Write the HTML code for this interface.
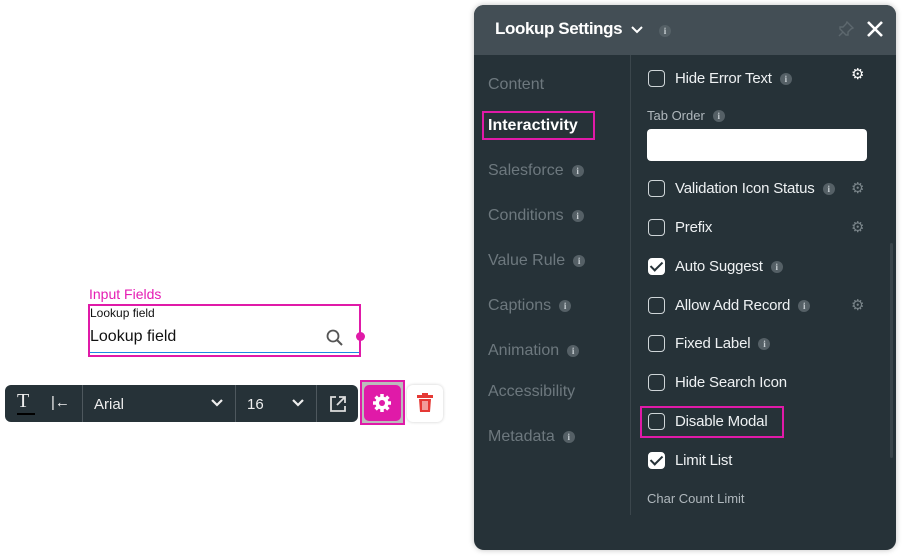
<!DOCTYPE html>
<html><head><style>
*{margin:0;padding:0;box-sizing:border-box}
body{width:903px;height:557px;background:#fff;position:relative;font-family:"Liberation Sans",sans-serif;overflow:hidden}
.a{position:absolute}
.panel{left:474px;top:5px;width:422px;height:545px;background:#263238;border-radius:10px;overflow:hidden;box-shadow:0 0 6px rgba(0,0,0,.25)}
.hdr{left:0;top:0;width:422px;height:50px;background:#434e55}
.nav{color:#6d787e;font-size:16px;left:14px}
.info{display:inline-block;width:12px;height:12px;border-radius:50%;background:#556066;color:#c8cfd3;font-size:9px;text-align:center;line-height:12px;font-family:"Liberation Serif",serif;font-weight:bold;vertical-align:1px;margin-left:8px}
.row{left:174px;color:#eef1f3;font-size:15px;height:20px;line-height:20px;white-space:nowrap;letter-spacing:-.2px}
.cb{display:inline-block;width:17px;height:17px;border:1.5px solid #cfd5d8;border-radius:4px;vertical-align:-4px;margin-right:10px}
.ck{background:#fff;border-color:#fff;position:relative}
.ck:after{content:"";position:absolute;left:4px;top:0px;width:5px;height:10px;border:solid #263238;border-width:0 2px 2px 0;transform:rotate(45deg)}
.gear{color:#7a858a;font-size:15px}
</style></head><body>
<div class="a" style="left:89px;top:286px;color:#e51db3;font-size:14px">Input Fields</div>
<div class="a" style="left:88px;top:304px;width:273px;height:53px;border:2px solid #e01aa8"></div>
<div class="a" style="left:90px;top:306px;font-size:12px;color:#111">Lookup field</div>
<div class="a" style="left:90px;top:328px;font-size:16px;color:#111">Lookup field</div>
<svg class="a" style="left:325px;top:328px" width="20" height="20" viewBox="0 0 20 20"><circle cx="8" cy="8" r="5.5" fill="none" stroke="#555" stroke-width="1.8"/><line x1="12" y1="12" x2="17" y2="17" stroke="#555" stroke-width="2"/></svg>
<div class="a" style="left:90px;top:352px;width:269px;height:1px;background:#1e88e5"></div>
<div class="a" style="left:356px;top:332px;width:9px;height:9px;border-radius:50%;background:#e01aa8"></div>

<div class="a" style="left:5px;top:385px;width:353px;height:37px;background:#263238;border-radius:6px"></div>
<div class="a" style="left:17px;top:390px;color:#eee;font-size:20px;font-family:'Liberation Serif',serif">T</div>
<div class="a" style="left:17px;top:413px;width:18px;height:2px;background:#000"></div>
<div class="a" style="left:51px;top:394px;color:#eee;font-size:15px">|←</div>
<div class="a" style="left:82px;top:385px;width:1px;height:37px;background:#4e585e"></div>
<div class="a" style="left:94px;top:396px;color:#eee;font-size:15px">Arial</div>
<svg class="a" style="left:211px;top:399px" width="12" height="8" viewBox="0 0 12 8"><path d="M1 1l5 5 5-5" fill="none" stroke="#eee" stroke-width="2.2"/></svg>
<div class="a" style="left:235px;top:385px;width:1px;height:37px;background:#4e585e"></div>
<div class="a" style="left:247px;top:396px;color:#eee;font-size:15px">16</div>
<svg class="a" style="left:292px;top:399px" width="12" height="8" viewBox="0 0 12 8"><path d="M1 1l5 5 5-5" fill="none" stroke="#eee" stroke-width="2.2"/></svg>
<div class="a" style="left:316px;top:385px;width:1px;height:37px;background:#4e585e"></div>
<svg class="a" style="left:329px;top:395px" width="18" height="18" viewBox="0 0 18 18"><path d="M7 2H2v14h14v-5" fill="none" stroke="#ddd" stroke-width="1.8"/><path d="M10 2h6v6M16 2L8 10" fill="none" stroke="#ddd" stroke-width="1.8"/></svg>
<div class="a" style="left:360px;top:380px;width:45px;height:45px;border:2px solid #e01aa8;background:#bbb"></div>
<div class="a" style="left:364px;top:385px;width:37px;height:36px;background:#e01aa8;border-radius:5px"></div>
<svg class="a" style="left:372px;top:393px" width="20" height="20" viewBox="0 0 20 20"><g fill="#fff"><circle cx="10" cy="10" r="6.5"/><g stroke="#fff" stroke-width="3.5"><line x1="10" y1="1" x2="10" y2="19"/><line x1="1" y1="10" x2="19" y2="10"/><line x1="3.6" y1="3.6" x2="16.4" y2="16.4"/><line x1="16.4" y1="3.6" x2="3.6" y2="16.4"/></g></g><circle cx="10" cy="10" r="3" fill="#e01aa8"/></svg>
<div class="a" style="left:407px;top:385px;width:36px;height:37px;background:#fff;border-radius:6px;box-shadow:0 0 3px rgba(0,0,0,.2)"></div>
<svg class="a" style="left:416px;top:393px" width="18" height="20" viewBox="0 0 18 20"><rect x="1" y="2" width="16" height="3" fill="#e53935"/><rect x="6" y="0" width="6" height="3" fill="#e53935"/><path d="M3 6h12l-1 13H4z" fill="#e53935"/><path d="M7 8v9M9 8v9M11 8v9" stroke="#fff" stroke-width="1"/></svg>

<div class="a panel">
 <div class="a hdr"></div>
 <div class="a" style="left:21px;top:14px;color:#fff;font-size:17px;font-weight:bold;letter-spacing:-.4px">Lookup Settings</div>
 <svg class="a" style="left:157px;top:21px" width="12" height="8" viewBox="0 0 12 8"><path d="M1 1l5 5 5-5" fill="none" stroke="#fff" stroke-width="2"/></svg>
 <div class="a" style="left:185px;top:17px"><span class="info" style="margin:0">i</span></div>
 <svg class="a" style="left:364px;top:16px" width="16" height="16" viewBox="0 0 16 16"><path d="M9 1l6 6-2 1-3 3 0 3-2 0-6-6 0-2 3 0 3-3z M5 11l-4 4" fill="none" stroke="#5d686e" stroke-width="1.4"/></svg>
 <svg class="a" style="left:392px;top:15px" width="18" height="18" viewBox="0 0 18 18"><path d="M2 2l14 14M16 2L2 16" stroke="#fff" stroke-width="2.6"/></svg>
 <div class="a" style="left:156px;top:50px;width:1px;height:460px;background:#3b464c"></div>
 <div class="a nav" style="top:71px">Content</div>
 <div class="a" style="left:8px;top:106px;width:113px;height:29px;border:2px solid #e01aa8"></div>
 <div class="a nav" style="top:112px;color:#fff;font-weight:bold">Interactivity</div>
 <div class="a nav" style="top:157px">Salesforce<span class="info">i</span></div>
 <div class="a nav" style="top:202px">Conditions<span class="info">i</span></div>
 <div class="a nav" style="top:247px">Value Rule<span class="info">i</span></div>
 <div class="a nav" style="top:292px">Captions<span class="info">i</span></div>
 <div class="a nav" style="top:337px">Animation<span class="info">i</span></div>
 <div class="a nav" style="top:378px">Accessibility</div>
 <div class="a nav" style="top:423px">Metadata<span class="info">i</span></div>

 <div class="a row" style="top:64px"><span class="cb"></span>Hide Error Text<span class="info">i</span></div>
 <div class="a gear" style="left:377px;top:60px;color:#fff">⚙</div>
 <div class="a" style="left:173px;top:103px;color:#b0b8bd;font-size:13px">Tab Order<span class="info">i</span></div>
 <div class="a" style="left:173px;top:124px;width:220px;height:32px;background:#fff;border-radius:4px"></div>
 <div class="a row" style="top:174px"><span class="cb"></span>Validation Icon Status<span class="info">i</span></div>
 <div class="a gear" style="left:377px;top:174px">⚙</div>
 <div class="a row" style="top:213px"><span class="cb"></span>Prefix</div>
 <div class="a gear" style="left:377px;top:213px">⚙</div>
 <div class="a row" style="top:252px"><span class="cb ck"></span>Auto Suggest<span class="info">i</span></div>
 <div class="a row" style="top:291px"><span class="cb"></span>Allow Add Record<span class="info">i</span></div>
 <div class="a gear" style="left:377px;top:291px">⚙</div>
 <div class="a row" style="top:329px"><span class="cb"></span>Fixed Label<span class="info">i</span></div>
 <div class="a row" style="top:368px"><span class="cb"></span>Hide Search Icon</div>
 <div class="a" style="left:166px;top:401px;width:144px;height:32px;border:2px solid #e01aa8"></div>
 <div class="a row" style="top:407px"><span class="cb"></span>Disable Modal</div>
 <div class="a row" style="top:446px"><span class="cb ck"></span>Limit List</div>
 <div class="a" style="left:173px;top:486px;color:#b0b8bd;font-size:13px">Char Count Limit</div>
 <div class="a" style="left:416px;top:238px;width:3px;height:215px;background:#3a454b;border-radius:2px"></div>
</div>
</body></html>
